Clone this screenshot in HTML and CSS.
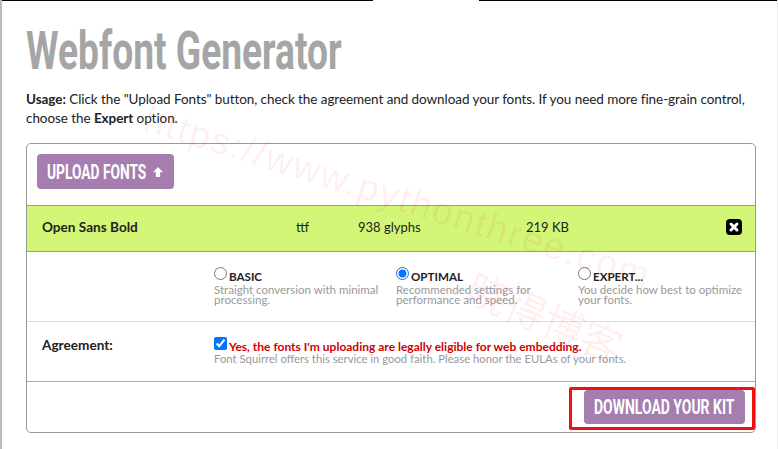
FILE: index.html
```html
<!DOCTYPE html>
<html lang="en">
<head>
    <meta charset="UTF-8">
    <meta name="viewport" content="width=device-width, initial-scale=1.0">
    <title>Webfont Generator</title>
    <link rel="stylesheet" href="styles.css">
</head>
<body>
    <div class="topbar">
        <div class="topbar-seg topbar-left"></div>
        <div class="topbar-gap"></div>
        <div class="topbar-seg topbar-right"></div>
    </div>
    <div class="page">
        <h1><span class="squeeze title-text">Webfont Generator</span></h1>
        <p class="usage"><strong>Usage:</strong> Click the "Upload Fonts" button, check the agreement and download your fonts. If you need more fine-grain control, choose the <strong>Expert</strong> option.</p>
        <div class="panel">
            <div class="upload-row">
                <a class="btn btn-upload"><span class="squeeze upload-text">UPLOAD FONTS</span>
                    <svg class="arrow" width="12" height="12" viewBox="0 0 12 12"><path d="M6 1 L11 6.2 L8.1 6.2 L8.1 11 L3.9 11 L3.9 6.2 L1 6.2 Z" fill="#fff"/></svg>
                </a>
            </div>
            <div class="font-row">
                <span class="font-name">Open Sans Bold</span>
                <span class="font-type">ttf</span>
                <span class="font-glyphs">938 glyphs</span>
                <span class="font-size">219 KB</span>
                <svg class="remove" width="16" height="16" viewBox="0 0 16 16"><rect width="16" height="16" rx="4" fill="#000"/><path d="M5 5 L11 11 M11 5 L5 11" stroke="#fff" stroke-width="3" stroke-linecap="round"/></svg>
            </div>
            <div class="options-row">
                <label class="option">
                    <span class="option-head"><input type="radio" name="mode"><b>BASIC</b></span>
                    <span class="option-desc">Straight conversion with minimal processing.</span>
                </label>
                <label class="option">
                    <span class="option-head"><input type="radio" name="mode" checked><b>OPTIMAL</b></span>
                    <span class="option-desc">Recommended settings for performance and speed.</span>
                </label>
                <label class="option">
                    <span class="option-head"><input type="radio" name="mode"><b>EXPERT...</b></span>
                    <span class="option-desc">You decide how best to optimize your fonts.</span>
                </label>
            </div>
            <div class="agreement-row">
                <div class="agreement-label">Agreement:</div>
                <div>
                    <div class="agreement-head"><input type="checkbox" checked><span class="agreement-yes">Yes, the fonts I'm uploading are legally eligible for web embedding.</span></div>
                    <div class="agreement-note">Font Squirrel offers this service in good faith. Please honor the EULAs of your fonts.</div>
                </div>
            </div>
            <div class="download-row">
                <a class="btn btn-download"><span class="squeeze download-text">DOWNLOAD YOUR KIT</span></a>
                <div class="highlight"></div>
            </div>
        </div>
    </div>
    <div class="watermark wm-url">https://www.pythonthree.com</div>
    <div class="watermark wm-cn">晓得博客</div>
</body>
</html>
```

FILE: styles.css
```css
* {
    box-sizing: border-box;
}
html, body {
    height: 100%;
}
body {
    margin: 0;
    background-color: white;
    font-family: 'Lato', sans-serif;
    color: #222;
    overflow: hidden;
    position: relative;
    border-left: 2px solid #bbb;
    border-right: 1px solid #eee;
}
.topbar {
    display: flex;
    height: 1px;
    margin-left: -2px;
    margin-right: -1px;
}
.topbar-left {
    width: 373px;
}
.topbar-gap {
    width: 106px;
}
.topbar-right {
    flex: 1;
}
.topbar-seg {
    background-color: black;
}
.page {
    padding: 0 21px 0 24px;
}
/* no condensed face installed, so roboto gets squeezed */
.squeeze {
    display: inline-block;
    white-space: nowrap;
    transform-origin: left center;
    font-family: 'Roboto', sans-serif;
}
h1 {
    margin: 21px 0 0;
    font-size: 54px;
    line-height: 54px;
    font-weight: 700;
    color: #a5a5a5;
}
.title-text {
    width: 315px;
    transform: scaleX(0.688);
}
.usage {
    margin: 12px 0 0;
    font-size: 13.5px;
    letter-spacing: -0.07px;
    line-height: 19px;
}
.panel {
    margin-top: 15px;
    height: 290px;
    border: 1px solid #999;
    border-radius: 5px;
    display: flex;
    flex-direction: column;
}
.btn {
    display: inline-flex;
    align-items: center;
    background-color: #a57eaf;
    color: white;
    border-radius: 4px;
    font-weight: 700;
}
.upload-row {
    height: 61px;
    padding: 10px 0 0 10px;
}
.btn-upload {
    width: 137px;
    height: 35px;
    padding-left: 10px;
    gap: 8px;
    font-size: 21px;
}
.upload-text {
    width: 97px;
    transform: scaleX(0.655);
}
.font-row {
    height: 47px;
    display: flex;
    align-items: center;
    background-color: #d3f676;
    border-top: 1px solid #999;
    border-bottom: 1px solid #999;
    padding: 0 13px 3px 15px;
    font-size: 13px;
}
.font-name {
    width: 254px;
    font-size: 13.6px;
    font-weight: 700;
}
.font-type {
    width: 62px;
}
.font-glyphs {
    width: 168px;
}
.font-size {
    flex: 1;
}
.options-row {
    height: 70px;
    display: flex;
    padding: 15px 0 0 187px;
    border-bottom: 1px solid #ddd;
}
.option {
    flex: none;
    width: 182px;
    padding-right: 8px;
    display: block;
}
.option-head {
    display: flex;
    align-items: center;
    font-size: 11.6px;
    height: 18px;
}
.option-head input {
    margin: 0 2px 6px 0;
    width: 13px;
    height: 13px;
}
.option-desc {
    display: block;
    font-size: 11.5px;
    line-height: 10px;
    color: #999;
}
.agreement-row {
    height: 60px;
    display: flex;
    padding: 15px 0 0 15px;
    border-bottom: 1px solid #aaa;
}
.agreement-label {
    width: 172px;
    font-size: 13.6px;
    font-weight: 700;
}
.agreement-head {
    display: flex;
    align-items: center;
    height: 18px;
}
.agreement-head input {
    margin: 0 2px 5px 0;
    width: 13px;
    height: 13px;
}
.agreement-yes {
    font-size: 12px;
    font-weight: 700;
    color: #d00000;
}
.agreement-note {
    margin-top: -3px;
    font-size: 11.3px;
    color: #999;
}
.download-row {
    flex: 1;
    display: flex;
    justify-content: flex-end;
    padding: 8px 10px 0 0;
    position: relative;
}
.btn-download {
    width: 161px;
    height: 34px;
    padding-left: 10px;
    font-size: 21px;
}
.download-text {
    width: 140px;
    transform: scaleX(0.665);
}
.highlight {
    position: absolute;
    top: 5px;
    right: 0;
    width: 186px;
    height: 43px;
    border: 3px solid #f01010;
    border-radius: 2px;
}
.watermark {
    position: absolute;
    color: rgba(255, 0, 0, 0.08);
    white-space: nowrap;
    transform-origin: left top;
    pointer-events: none;
}
.wm-url {
    left: 150px;
    top: 98px;
    font-family: 'Liberation Sans', sans-serif;
    font-size: 37px;
    letter-spacing: 2px;
    transform: rotate(17.5deg);
}
.wm-cn {
    left: 480px;
    top: 256px;
    font-family: 'Noto Sans CJK SC', sans-serif;
    font-size: 41px;
    transform: rotate(23deg);
}
```
